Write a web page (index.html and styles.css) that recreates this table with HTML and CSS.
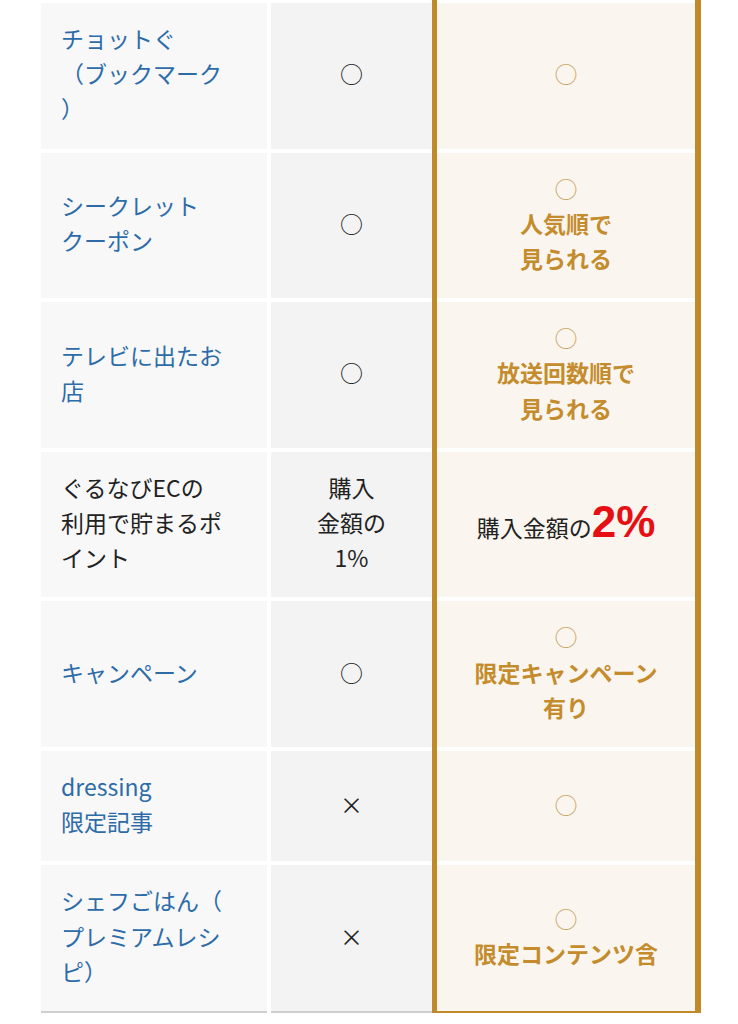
FILE: index.html
```html
<!DOCTYPE html>
<html lang="ja">
<head>
    <meta charset="UTF-8">
    <meta name="viewport" content="width=device-width, initial-scale=1.0">
    <title>会員特典の比較</title>
    <link rel="stylesheet" href="styles.css">
</head>
<body>

    <div class="compare">
        <div class="frame"></div>

        <div class="cell name">チョットぐ<br>（ブックマーク<br>）</div>
        <div class="cell free">○</div>
        <div class="cell premium"><span class="mark">○</span></div>

        <div class="cell name">シークレット<br>クーポン</div>
        <div class="cell free">○</div>
        <div class="cell premium"><span class="mark">○</span>人気順で<br>見られる</div>

        <div class="cell name">テレビに出たお<br>店</div>
        <div class="cell free">○</div>
        <div class="cell premium"><span class="mark">○</span>放送回数順で<br>見られる</div>

        <div class="cell name plain">ぐるなびECの<br>利用で貯まるポ<br>イント</div>
        <div class="cell free">購入<br>金額の<br>1%</div>
        <div class="cell premium plain">
            <p>購入金額の<span class="big">2%</span></p>
        </div>

        <div class="cell name">キャンペーン</div>
        <div class="cell free">○</div>
        <div class="cell premium"><span class="mark">○</span>限定キャンペーン<br>有り</div>

        <div class="cell name">dressing<br>限定記事</div>
        <div class="cell free">×</div>
        <div class="cell premium"><span class="mark">○</span></div>

        <div class="cell name last">シェフごはん（<br>プレミアムレシ<br>ピ）</div>
        <div class="cell free last">×</div>
        <div class="cell premium last"><span class="mark">○</span>限定コンテンツ含</div>
    </div>

</body>
</html>
```

FILE: styles.css
```css
body {
    margin: 0;
    padding-top: 3px;
    background: #fff;
    font-family: "Noto Sans CJK JP", "Noto Sans", sans-serif;
}

.compare {
    position: relative;
    display: grid;
    grid-template-columns: 230px 161px 269px;
    grid-template-rows: repeat(7, auto);
    row-gap: 4px;
    margin-left: 41px;
    width: 660px;
}

/* gold frame round the premium column */
.frame {
    position: absolute;
    grid-column: 3;
    grid-row: 1 / 8;
    top: -3px;
    bottom: -2px;
    left: 0;
    right: 0;
    border: solid #c08a2a;
    border-width: 0 6px 4px 5px;
}

.cell {
    display: flex;
    flex-direction: column;
    justify-content: center;
    padding: 18px 20px 22px;
    font-size: 23px;
    line-height: 35.2px;
}

.name {
    grid-column: 1;
    margin-right: 4px;
    background: #f8f8f8;
    color: #2d6ca8;
}
.name.plain { color: #222 }

.free {
    grid-column: 2;
    align-items: center;
    text-align: center;
    background: #f3f3f3;
    color: #222;
}

.premium {
    grid-column: 3;
    margin: 0 6px 0 5px;
    align-items: center;
    text-align: center;
    background: #faf6ef;
    color: #c48c2c;
    font-weight: bold;
}
.premium.plain {
    color: #222;
    font-weight: normal;
}
.premium p { margin: 0 }

.mark {
    font-weight: normal;
    color: #c9a665;
}

.big {
    font-family: "Liberation Sans", Arial, sans-serif;
    font-size: 44px;
    font-weight: bold;
    line-height: 1;
    color: #e50f14;
}

.name.last, .free.last { border-bottom: 2px solid #cfcfcf }
.premium.last { margin-bottom: 2px }
```
